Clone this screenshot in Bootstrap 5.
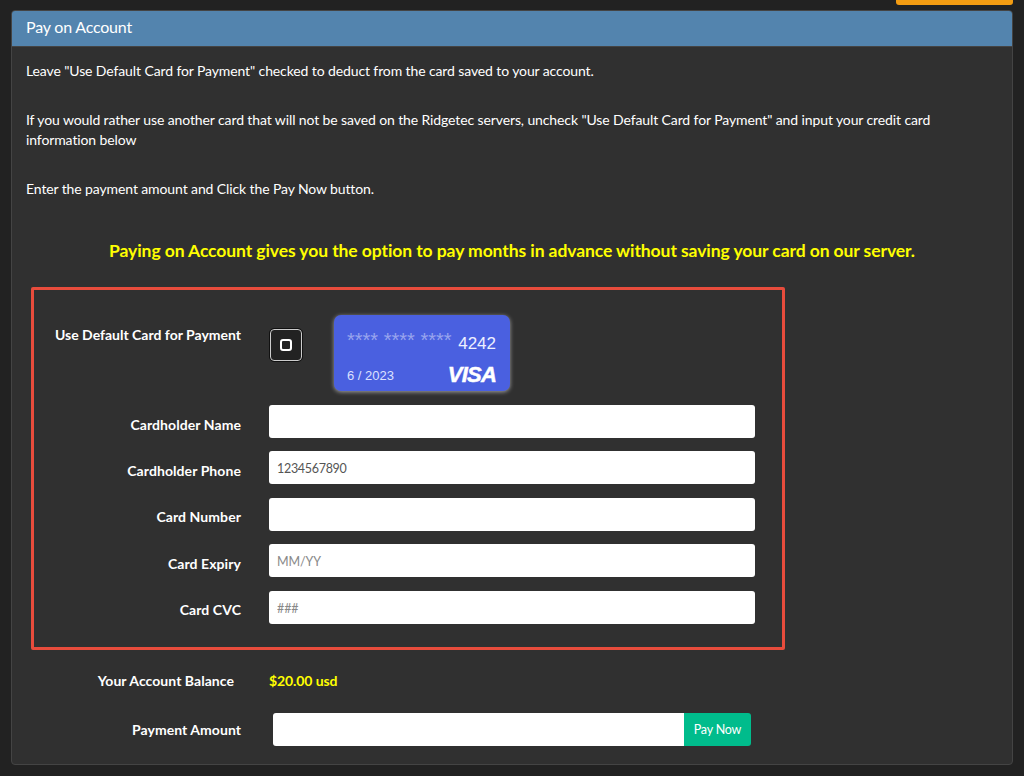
<!DOCTYPE html>
<html lang="en">
<head>
<meta charset="utf-8">
<title>Pay on Account</title>
<link href="https://cdn.jsdelivr.net/npm/bootstrap@5.3.0/dist/css/bootstrap.min.css" rel="stylesheet">
<style>
html,body{height:776px;overflow:hidden}
body{background:#222;color:#fff;font-family:Lato,sans-serif;font-size:14px;line-height:20px}
.page-wrap{padding:0 11px 0 11px}
.orange-tab{width:117px;height:5px;background:#f39c12;border-radius:0 0 3px 3px;margin-bottom:5px}
.pay-card{background:#303030;border:1px solid #444;border-radius:4px;height:755px;color:#fff}
.pay-head{background:#5384ae;color:#fff;font-size:16px;letter-spacing:-.2px;line-height:22px;padding:5px 14px 8px;height:36px;border-bottom:1px solid #444;border-radius:3px 3px 0 0}
.pay-body{padding:14px 14px 0}
.para{margin:0 0 29px;letter-spacing:-.11px}
.para-last{margin:0;letter-spacing:-.11px}
.promo{font-size:17.5px;letter-spacing:-.08px;line-height:24px;font-weight:700;color:#ff0;text-align:center;margin:40px 0 24px}
.red-box{width:754px;height:363px;margin-left:5px;border:3px solid #e74c3c;border-radius:2px;padding:25px 0 0}
.lab{width:207px;flex:none;text-align:right;font-weight:700;margin-right:28px;letter-spacing:.08px}
.fld-row .lab{padding-top:6px}
.fld{width:486px;height:33px;flex:none;background:#fff;border:0;border-radius:3px;padding:2px 8px 0;font-size:12.5px;letter-spacing:-.1px;color:#555;font-family:Lato,sans-serif}
.fld-val{letter-spacing:-.3px}
.fld::placeholder{color:#888;opacity:1}
.fld-row{margin-bottom:13.4px;align-items:center}
.top-row{height:77px;margin-bottom:13px}
.top-lab{padding-top:10px;letter-spacing:0}
.chk-box{width:32px;height:32px;flex:none;margin:14px 32px 0 1px;background:#222;border:1px solid #ccc;border-radius:4px;outline:1px solid #111;display:flex;align-items:center;justify-content:center}
.chk-in{width:12px;height:12px;border:2px solid #fff;border-radius:3px;margin-top:-1px}
.visa-card{width:176px;height:76px;flex:none;background:#4a60e0;border-radius:7px;box-shadow:0 1px 4px rgba(255,255,255,.55);padding:14px 14px 5px 13px;font-family:"Liberation Sans",Arial,sans-serif;display:flex;flex-direction:column;justify-content:space-between}
.stars{color:#98a4ee;font-size:20px;line-height:20px;margin-top:1px}
.num{color:#eef0ff;font-size:17px;line-height:18px;margin-top:6px}
.expd{color:#dbe0ff;font-size:13px;line-height:16px;margin-top:2px}
.vlogo{color:#fff;font-size:22px;line-height:22px;font-weight:700;font-style:italic;letter-spacing:-.8px;-webkit-text-stroke:.5px #fff}
.bal-row{margin-top:21px;height:20px}
.bal-lab{width:200px;flex:none;text-align:right;font-weight:700;margin-right:35px;letter-spacing:.05px}
.bal-val{color:#ff0;font-weight:700;letter-spacing:-.1px}
.amt-row{margin-top:22px}
.amt-lab{width:207px;flex:none;text-align:right;font-weight:700;margin-right:32px;letter-spacing:.05px}
.amt-in{width:411px;height:33px;background:#fff;border:0;border-radius:3px 0 0 3px}
.pay-btn{width:67px;height:33px;background:#00bc8c;color:#fff;border:0;border-radius:0 3px 3px 0;font-size:12.5px;letter-spacing:-.2px;padding:0;line-height:31px}
</style>
</head>
<body>
<div class="page-wrap">
  <div class="d-flex justify-content-end"><div class="orange-tab"></div></div>
  <div class="pay-card">
    <div class="pay-head">Pay on Account</div>
    <div class="pay-body">
      <p class="para">Leave "Use Default Card for Payment" checked to deduct from the card saved to your account.</p>
      <p class="para">If you would rather use another card that will not be saved on the Ridgetec servers, uncheck "Use Default Card for Payment" and input your credit card information below</p>
      <p class="para-last">Enter the payment amount and Click the Pay Now button.</p>
      <div class="promo">Paying on Account gives you the option to pay months in advance without saving your card on our server.</div>
      <div class="red-box">
        <div class="d-flex top-row">
          <div class="lab top-lab">Use Default Card for Payment</div>
          <div class="chk-box"><span class="chk-in"></span></div>
          <div class="visa-card">
            <div class="d-flex justify-content-between align-items-start"><span class="stars">**** **** ****</span><span class="num">4242</span></div>
            <div class="d-flex justify-content-between align-items-center"><span class="expd">6 / 2023</span><span class="vlogo">VISA</span></div>
          </div>
        </div>
        <div class="d-flex fld-row"><div class="lab">Cardholder Name</div><input class="fld" type="text"></div>
        <div class="d-flex fld-row"><div class="lab">Cardholder Phone</div><input class="fld fld-val" type="text" value="1234567890"></div>
        <div class="d-flex fld-row"><div class="lab">Card Number</div><input class="fld" type="text"></div>
        <div class="d-flex fld-row"><div class="lab">Card Expiry</div><input class="fld" type="text" placeholder="MM/YY"></div>
        <div class="d-flex fld-row"><div class="lab">Card CVC</div><input class="fld" type="text" placeholder="###"></div>
      </div>
      <div class="d-flex bal-row ms-2"><div class="bal-lab">Your Account Balance</div><div class="bal-val">$20.00 usd</div></div>
      <div class="d-flex amt-row align-items-center ms-2"><div class="amt-lab">Payment Amount</div><div class="d-flex"><input class="amt-in" type="text"><button class="btn pay-btn" type="button">Pay Now</button></div></div>
    </div>
  </div>
</div>
<script src="https://cdn.jsdelivr.net/npm/bootstrap@5.3.0/dist/js/bootstrap.bundle.min.js"></script>
</body>
</html>
